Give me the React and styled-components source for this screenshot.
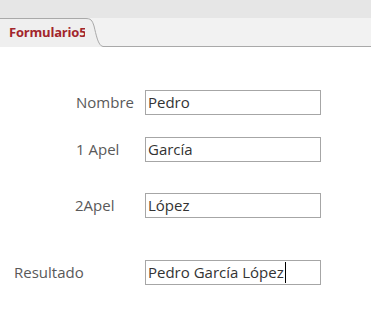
import React from "react";
import styled, { createGlobalStyle } from "styled-components";

const Global = createGlobalStyle`
  body {
    margin: 0;
    background: #ffffff;
    font-family: "Open Sans", "Liberation Sans", sans-serif;
  }
`;

const Page = styled.div`
  width: 371px;
  height: 335px;
  background: #ffffff;
  overflow: hidden;
`;

const TopBand = styled.div`
  height: 18px;
  background: #e6e6e6;
`;

const TabStrip = styled.div`
  display: flex;
  height: 29px;
  background: #f2f2f2;
`;

const Tab = styled.div`
  width: 85px;
  box-sizing: border-box;
  border-top: 1px solid #a9a9a9;
  background: #efefef;
  padding: 4px 0 0 9px;
  font-size: 13px;
  font-weight: 700;
  color: #a2262c;
  letter-spacing: -0.2px;
`;

const Filler = styled.div`
  flex: 1;
  border-bottom: 1px solid #a9a9a9;
`;

const Form = styled.div`
  display: flex;
  flex-direction: column;
  padding-top: 43px;
`;

const Row = styled.div`
  display: flex;
  align-items: center;
  height: 25px;
  margin-top: ${(p) => p.$gap || 0}px;
`;

const Label = styled.div`
  width: ${(p) => 145 - p.$left}px;
  padding-left: ${(p) => p.$left}px;
  box-sizing: content-box;
  font-size: 15px;
  color: #595959;
  margin-top: -2px;
  white-space: nowrap;
`;

const Field = styled.div`
  width: 176px;
  height: 25px;
  box-sizing: border-box;
  border: 1px solid #a6a6a6;
  padding: 1px 0 0 2px;
  font-size: 15px;
  line-height: 21px;
  color: #333333;
  white-space: nowrap;
`;

const Caret = styled.span`
  display: inline-block;
  width: 1px;
  height: 21px;
  background: #000;
  vertical-align: top;
  margin-left: 1px;
`;

const rows = [
  { label: "Nombre", left: 76, value: "Pedro", gap: 0 },
  { label: "1 Apel", left: 76, value: "García", gap: 22 },
  { label: "2Apel", left: 75, value: "López", gap: 31 },
  { label: "Resultado", left: 14, value: "Pedro García López", gap: 42, caret: true },
];

export default function App() {
  return (
    <Page>
      <Global />
      <TopBand />
      <TabStrip>
        <Tab>Formulario5</Tab>
        <svg width="18" height="29" viewBox="0 0 18 29">
          <path d="M0 0.5 C6 0.5 7 2 9 8 C11 16 13 28 18 28.5 L18 29 L0 29 Z" fill="#efefef" />
          <path d="M0 0.5 C6 0.5 7 2 9 8 C11 16 13 28 18 28.5" fill="none" stroke="#a9a9a9" strokeWidth="1" />
        </svg>
        <Filler />
      </TabStrip>
      <Form>
        {rows.map((r) => (
          <Row key={r.label} $gap={r.gap}>
            <Label $left={r.left}>{r.label}</Label>
            <Field>
              {r.value}
              {r.caret && <Caret />}
            </Field>
          </Row>
        ))}
      </Form>
    </Page>
  );
}
